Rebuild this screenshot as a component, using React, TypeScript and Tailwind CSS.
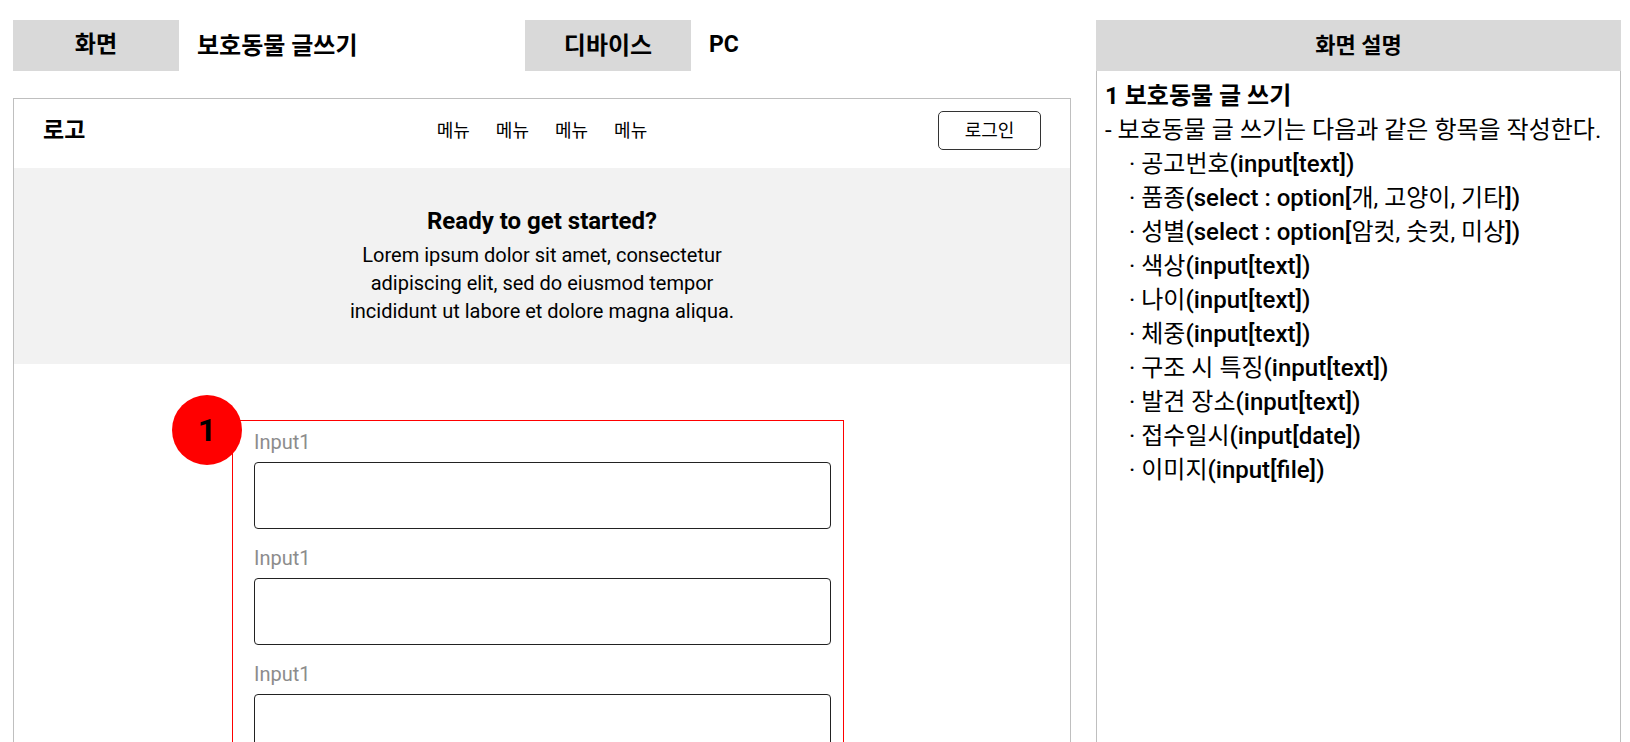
import React from "react";

const FONT = { fontFamily: 'Roboto, "Noto Sans CJK KR", sans-serif' };

function Item({ parts }: { parts: [string, boolean][] }) {
  return (
    <div className="h-[34px] whitespace-nowrap pl-[24px]">
      <span>· </span>
      {parts.map(([t, b], i) => (
        <span key={i} className={b ? "font-medium" : "font-normal"}>
          {t}
        </span>
      ))}
    </div>
  );
}

function Field() {
  return (
    <div className="mb-[17px]">
      <div className="text-[20px] leading-[24px] text-[#8c8c8c] mb-[8px]">Input1</div>
      <div className="h-[67px] rounded-[4px] border border-[#222]" />
    </div>
  );
}

export default function App() {
  return (
    <div className="h-[742px] w-[1630px] overflow-hidden bg-white text-black" style={FONT}>
      <div className="flex pt-[20px] pl-[13px]">
        <div className="w-[1058px]">
          <div className="flex h-[51px] items-center">
            <div className="flex h-full w-[166px] items-center justify-center bg-[#d9d9d9] text-[23px] font-bold">
              화면
            </div>
            <div className="w-[346px] pl-[18px] text-[24px] font-bold">보호동물 글쓰기</div>
            <div className="flex h-full w-[166px] items-center justify-center bg-[#d9d9d9] text-[24px] font-bold">
              디바이스
            </div>
            <div className="pl-[18px] text-[23px] font-bold">PC</div>
          </div>

          <div className="mt-[27px] border border-[#bfbfbf]">
            <div className="grid grid-cols-3 items-center px-[29px] pt-[12px] pb-[18px]">
              <div className="text-[23px] font-bold leading-[28px]">로고</div>
              <div className="flex justify-center gap-[26px] text-[18px]">
                <span>메뉴</span>
                <span>메뉴</span>
                <span>메뉴</span>
                <span>메뉴</span>
              </div>
              <div className="flex justify-end">
                <div className="flex h-[39px] w-[103px] items-center justify-center rounded-[5px] border border-[#333] text-[18px]">
                  로그인
                </div>
              </div>
            </div>

            <div className="bg-[#f2f2f2] py-[39px] text-center">
              <div className="text-[24px] font-bold leading-[28px]">Ready to get started?</div>
              <div className="mt-[6px] text-[20px] leading-[28px]">
                Lorem ipsum dolor sit amet, consectetur
                <br />
                adipiscing elit, sed do eiusmod tempor
                <br />
                incididunt ut labore et dolore magna aliqua.
              </div>
            </div>

            <div className="pt-[56px] pb-[40px]">
              <div className="relative ml-[218px] w-[612px] border border-[#ff0000] pt-[9px] pl-[21px] pr-[12px]">
                <div className="absolute left-[-61px] top-[-26px] flex h-[70px] w-[70px] items-center justify-center rounded-full bg-[#ff0000] text-[32px] font-bold">
                  1
                </div>
                <Field />
                <Field />
                <Field />
              </div>
            </div>
          </div>
        </div>

        <div className="ml-[25px] w-[525px]">
          <div className="flex h-[51px] items-center justify-center bg-[#d9d9d9] text-[22px] font-bold">
            화면 설명
          </div>
          <div className="h-[720px] border-x border-[#bfbfbf] pl-[8px] pt-[8px] text-[24px] leading-[34px]">
            <div className="h-[34px] font-bold">1 보호동물 글 쓰기</div>
            <div className="h-[34px] whitespace-nowrap">- 보호동물 글 쓰기는 다음과 같은 항목을 작성한다.</div>
            <Item parts={[["공고번호", false], ["(input[text])", true]]} />
            <Item parts={[["품종", false], ["(select : option[", true], ["개, 고양이, 기타", false], ["])", true]]} />
            <Item parts={[["성별", false], ["(select : option[", true], ["암컷, 숫컷, 미상", false], ["])", true]]} />
            <Item parts={[["색상", false], ["(input[text])", true]]} />
            <Item parts={[["나이", false], ["(input[text])", true]]} />
            <Item parts={[["체중", false], ["(input[text])", true]]} />
            <Item parts={[["구조 시 특징", false], ["(input[text])", true]]} />
            <Item parts={[["발견 장소", false], ["(input[text])", true]]} />
            <Item parts={[["접수일시", false], ["(input[date])", true]]} />
            <Item parts={[["이미지", false], ["(input[file])", true]]} />
          </div>
        </div>
      </div>
    </div>
  );
}
